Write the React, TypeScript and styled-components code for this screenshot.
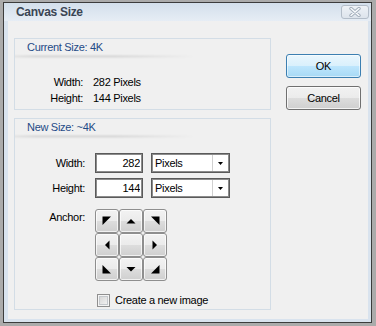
import React from 'react';
import styled, { createGlobalStyle } from 'styled-components';

const Global = createGlobalStyle`
  html, body { margin: 0; padding: 0; background: #ababab; }
  body {
    font-family: "Liberation Sans", Arial, sans-serif;
    font-size: 11px;
    letter-spacing: -0.3px;
    color: #000;
  }
  #root { width: 376px; height: 326px; padding: 2px 0 0 3px; box-sizing: border-box; overflow: hidden; }
`;

const Window = styled.div`
  box-sizing: border-box;
  width: 369px;
  height: 321px;
  border: 1px solid #3c3c3c;
  background: #d9e3ee;
  display: flex;
  flex-direction: column;
`;

const TitleBar = styled.div`
  height: 18px;
  flex: none;
  display: flex;
  align-items: flex-start;
  justify-content: space-between;
  padding: 0 2px 0 12px;
  background: linear-gradient(to bottom, #d3dfec, #e6edf5);
`;

const TitleText = styled.div`
  font-weight: bold;
  font-size: 12px;
  line-height: 18px;
  color: #3a4554;
`;

const CloseButton = styled.div`
  box-sizing: border-box;
  margin-top: 2px;
  width: 28px;
  height: 14px;
  border: 1px solid #b3bdc9;
  border-radius: 3px;
  background: linear-gradient(to bottom, #eef2f7, #dde4ec);
  display: flex;
  align-items: center;
  justify-content: center;
`;

const Client = styled.div`
  flex: 1;
  margin: 0 3px 3px 4px;
  background: #f0f0f0;
  display: flex;
  gap: 15px;
  padding: 17px 6px 0 6px;
  box-sizing: border-box;
`;

const LeftColumn = styled.div`
  display: flex;
  flex-direction: column;
  gap: 8px;
`;

const RightColumn = styled.div`
  display: flex;
  flex-direction: column;
  gap: 8px;
  padding-top: 16px;
`;

const Group = styled.div<{ $height: number }>`
  box-sizing: border-box;
  width: 257px;
  height: ${(p) => p.$height}px;
  border: 1px solid #d3dde6;
  display: flex;
  flex-direction: column;
`;

const GroupHeader = styled.div`
  padding-left: 12px;
  line-height: 16px;
  color: #1f4b87;
`;

const HeaderShadow = styled.div`
  height: 5px;
  width: 180px;
  margin-top: -1px;
  background: linear-gradient(to bottom, rgba(0,0,0,0), rgba(0,0,0,0.09) 45%, rgba(0,0,0,0));
  -webkit-mask-image: linear-gradient(to right, rgba(0,0,0,0.5), #000 12%, #000 55%, rgba(0,0,0,0));
  mask-image: linear-gradient(to right, rgba(0,0,0,0.5), #000 12%, #000 55%, rgba(0,0,0,0));
`;

const InfoGrid = styled.div`
  display: grid;
  grid-template-columns: 68px auto;
  column-gap: 10px;
  grid-auto-rows: 16px;
  align-items: center;
  padding-top: 15px;
`;

const InfoLabel = styled.div`
  text-align: right;
`;

const Form = styled.div`
  display: flex;
  flex-direction: column;
  padding-top: 14px;
`;

const FieldRow = styled.div<{ $top?: number; $align?: string }>`
  display: flex;
  align-items: ${(p) => p.$align || 'center'};
  margin-top: ${(p) => p.$top || 0}px;
`;

const FieldLabel = styled.div<{ $offset?: number }>`
  width: 70px;
  margin-right: 10px;
  text-align: right;
  line-height: 16px;
  margin-top: ${(p) => p.$offset || 0}px;
`;

const NumberInput = styled.input`
  box-sizing: border-box;
  width: 48px;
  height: 20px;
  margin: 0;
  padding: 0 2px 0 0;
  border: 1px solid #5a5a5a;
  box-shadow: inset 0 0 0 1px #8c8c8c;
  background: #fff;
  font: inherit;
  letter-spacing: inherit;
  text-align: right;
  color: #000;
  outline: none;
`;

const Select = styled.div`
  box-sizing: border-box;
  width: 79px;
  height: 20px;
  margin-left: 8px;
  border: 1px solid #5a5a5a;
  box-shadow: inset 0 0 0 1px #8c8c8c;
  background: #fff;
  display: flex;
`;

const SelectText = styled.div`
  flex: 1;
  padding-left: 3px;
  line-height: 18px;
`;

const SelectArrow = styled.div`
  width: 15px;
  margin: 1px 1px 1px 0;
  border-left: 1px solid #d0d0d0;
  display: flex;
  align-items: center;
  justify-content: center;
`;

const AnchorGrid = styled.div`
  display: grid;
  grid-template-columns: repeat(3, 24px);
  grid-template-rows: repeat(3, 24px);
`;

const AnchorButton = styled.div`
  box-sizing: border-box;
  border: 1px solid #8e8e8e;
  border-radius: 3px;
  background: linear-gradient(to bottom, #f2f2f2 0%, #ebebeb 50%, #dddddd 50%, #cfcfcf 100%);
  box-shadow: inset 0 0 0 1px rgba(255,255,255,0.7);
  display: flex;
  align-items: center;
  justify-content: center;
`;

const CheckRow = styled.div`
  display: flex;
  align-items: center;
  margin-top: 12px;
  padding-left: 82px;
`;

const CheckBox = styled.div`
  box-sizing: border-box;
  width: 13px;
  height: 13px;
  border: 1px solid #8f8f8f;
  background: linear-gradient(135deg, #d0d0d0, #f8f8f8);
  box-shadow: inset 0 0 0 1px #f4f4f4, inset 0 0 0 2px #c4c8cc;
`;

const CheckText = styled.div`
  margin-left: 5px;
  line-height: 14px;
`;

const Button = styled.div<{ $primary?: boolean }>`
  box-sizing: border-box;
  width: 75px;
  height: 24px;
  border-radius: 3px;
  border: 1px solid ${(p) => (p.$primary ? '#3c7fb1' : '#707070')};
  background: ${(p) =>
    p.$primary
      ? 'linear-gradient(to bottom, #eaf6fd 0%, #d9f0fc 50%, #bee6fd 50%, #a7d9f5 100%)'
      : 'linear-gradient(to bottom, #f2f2f2 0%, #ebebeb 50%, #dddddd 50%, #cfcfcf 100%)'};
  box-shadow: inset 0 0 0 1px ${(p) => (p.$primary ? 'rgba(255,255,255,0.55)' : 'rgba(255,255,255,0.75)')};
  display: flex;
  align-items: center;
  justify-content: center;
  line-height: 22px;
`;

const arrows: Record<string, string> = {
  nw: '7.5,7.5 16,7.5 7.5,16',
  n: '7.5,14.5 16.5,14.5 12,10',
  ne: '8,7.5 16.5,7.5 16.5,16',
  w: '14.5,7.5 14.5,16.5 10,12',
  c: '',
  e: '9.5,7.5 9.5,16.5 14,12',
  sw: '7.5,8 7.5,16.5 16,16.5',
  s: '7.5,10 16.5,10 12,14.5',
  se: '16.5,8 16.5,16.5 8,16.5',
};

const Arrow: React.FC<{ points: string }> = ({ points }) => (
  <svg width="22" height="22" viewBox="1 1 22 22">
    {points && <polygon points={points} fill="#000" />}
  </svg>
);

export default function App() {
  return (
    <>
      <Global />
      <Window>
        <TitleBar>
          <TitleText>Canvas Size</TitleText>
          <CloseButton>
            <svg width="14" height="10" viewBox="0 0 14 10">
              <path d="M3 1.5 L11 8.5 M11 1.5 L3 8.5" stroke="#a3aebb" strokeWidth="3.4" strokeLinecap="round" />
              <path d="M3 1.5 L11 8.5 M11 1.5 L3 8.5" stroke="#fafcfe" strokeWidth="1.5" strokeLinecap="round" />
            </svg>
          </CloseButton>
        </TitleBar>
        <Client>
          <LeftColumn>
            <Group $height={72}>
              <GroupHeader>Current Size: 4K</GroupHeader>
              <HeaderShadow />
              <InfoGrid>
                <InfoLabel>Width:</InfoLabel>
                <div>282 Pixels</div>
                <InfoLabel>Height:</InfoLabel>
                <div>144 Pixels</div>
              </InfoGrid>
            </Group>
            <Group $height={192}>
              <GroupHeader>New Size: ~4K</GroupHeader>
              <HeaderShadow />
              <Form>
                <FieldRow>
                  <FieldLabel>Width:</FieldLabel>
                  <NumberInput readOnly value="282" />
                  <Select>
                    <SelectText>Pixels</SelectText>
                    <SelectArrow>
                      <svg width="5" height="3" viewBox="0 0 5 3"><polygon points="0,0 5,0 2.5,3" fill="#000" /></svg>
                    </SelectArrow>
                  </Select>
                </FieldRow>
                <FieldRow $top={5}>
                  <FieldLabel>Height:</FieldLabel>
                  <NumberInput readOnly value="144" />
                  <Select>
                    <SelectText>Pixels</SelectText>
                    <SelectArrow>
                      <svg width="5" height="3" viewBox="0 0 5 3"><polygon points="0,0 5,0 2.5,3" fill="#000" /></svg>
                    </SelectArrow>
                  </Select>
                </FieldRow>
                <FieldRow $top={11} $align="flex-start">
                  <FieldLabel $offset={0}>Anchor:</FieldLabel>
                  <AnchorGrid>
                    {['nw', 'n', 'ne', 'w', 'c', 'e', 'sw', 's', 'se'].map((k) => (
                      <AnchorButton key={k}>
                        <Arrow points={arrows[k]} />
                      </AnchorButton>
                    ))}
                  </AnchorGrid>
                </FieldRow>
                <CheckRow>
                  <CheckBox />
                  <CheckText>Create a new image</CheckText>
                </CheckRow>
              </Form>
            </Group>
          </LeftColumn>
          <RightColumn>
            <Button $primary>OK</Button>
            <Button>Cancel</Button>
          </RightColumn>
        </Client>
      </Window>
    </>
  );
}
